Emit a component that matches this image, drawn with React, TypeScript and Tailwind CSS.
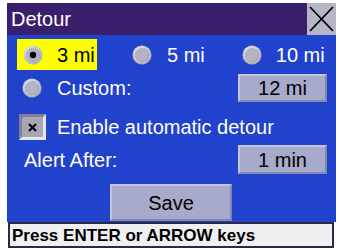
import React from "react";

function Radio({ checked = false }: { checked?: boolean }) {
  return (
    <svg width="20" height="20" viewBox="0 0 20 20" className="shrink-0">
      <defs>
        <radialGradient id="rg" cx="40%" cy="35%" r="70%">
          <stop offset="0%" stopColor="#f4f4f8" />
          <stop offset="100%" stopColor="#a8a8b8" />
        </radialGradient>
      </defs>
      <circle cx="10" cy="10" r="9.5" fill="url(#rg)" />
      <circle cx="10" cy="10" r="6.5" fill="#b4b4c2" stroke="#8a8a9c" strokeWidth="1" strokeDasharray="1 1" />
      {checked && <circle cx="10" cy="10" r="3.2" fill="#000" />}
    </svg>
  );
}

function Btn({ children, className = "" }: { children: React.ReactNode; className?: string }) {
  return (
    <div
      className={
        "flex items-center justify-center bg-[#a8aacb] border-2 border-t-[#c4c6de] border-l-[#c4c6de] border-b-[#8386ad] border-r-[#8386ad] text-black text-[20px] leading-none " +
        className
      }
    >
      {children}
    </div>
  );
}

export default function App() {
  return (
    <div
      className="w-[342px] h-[250px] bg-white pt-[3px] pl-[7px] overflow-hidden"
      style={{ fontFamily: '"Liberation Sans", Arial, sans-serif' }}
    >
      <div className="w-[329px]">
        {/* Title bar */}
        <div className="flex h-[32px] bg-[#3a1f6c]">
          <div className="flex-1 flex items-center pl-[4px] text-white text-[20px] leading-none">Detour</div>
          <div className="w-[29px] h-[32px] bg-[#b6b6c6] flex items-center justify-center">
            <svg width="25" height="26" viewBox="0 0 25 26">
              <line x1="1" y1="1" x2="24" y2="25" stroke="#000" strokeWidth="1.8" />
              <line x1="24" y1="1" x2="1" y2="25" stroke="#000" strokeWidth="1.8" />
            </svg>
          </div>
        </div>

        {/* Body */}
        <div className="h-[187px] bg-[#2142cc] flex flex-col pt-[4px] text-white text-[20px] leading-none">
          {/* Row 1 */}
          <div className="flex items-center h-[31px]">
            <div className="ml-[10px] w-[80px] h-[31px] bg-[#ffff00] flex items-center pl-[6px] text-black">
              <Radio checked />
              <span className="ml-[14px]">3 mi</span>
            </div>
            <div className="ml-[35px] flex items-center">
              <Radio />
              <span className="ml-[15px]">5 mi</span>
            </div>
            <div className="ml-[37px] flex items-center">
              <Radio />
              <span className="ml-[14px]">10 mi</span>
            </div>
          </div>

          {/* Row 2 */}
          <div className="mt-[4px] h-[28px] flex items-center">
            <div className="ml-[15px] flex items-center">
              <Radio />
              <span className="ml-[15px]">Custom:</span>
            </div>
            <Btn className="ml-auto mr-[9px] w-[89px] h-[28px]">12 mi</Btn>
          </div>

          {/* Row 3 */}
          <div className="mt-[12px] h-[26px] flex items-center">
            <div className="ml-[12px] w-[27px] h-[26px] border-[3px] border-t-[#80808e] border-l-[#80808e] border-b-[#e6e6ee] border-r-[#e6e6ee] bg-[#a6a6b6] flex items-center justify-center">
              <svg width="9" height="9" viewBox="0 0 9 9">
                <line x1="1" y1="1" x2="8" y2="8" stroke="#000" strokeWidth="2.2" />
                <line x1="8" y1="1" x2="1" y2="8" stroke="#000" strokeWidth="2.2" />
              </svg>
            </div>
            <span className="ml-[11px]">Enable automatic detour</span>
          </div>

          {/* Row 4 */}
          <div className="mt-[5px] h-[29px] flex items-center">
            <span className="ml-[17px]">Alert After:</span>
            <Btn className="ml-auto mr-[9px] w-[89px] h-[29px]">1 min</Btn>
          </div>

          {/* Save */}
          <div className="mt-[10px] flex">
            <Btn className="ml-[103px] w-[122px] h-[37px]">Save</Btn>
          </div>
        </div>

        {/* Status bar */}
        <div className="ml-[1px] w-[326px] h-[26px] bg-[#f0f0f2] border-2 border-[#2a2a48] flex items-center pl-[2px] text-black font-bold text-[17px] leading-none">
          Press ENTER or ARROW keys
        </div>
      </div>
    </div>
  );
}
